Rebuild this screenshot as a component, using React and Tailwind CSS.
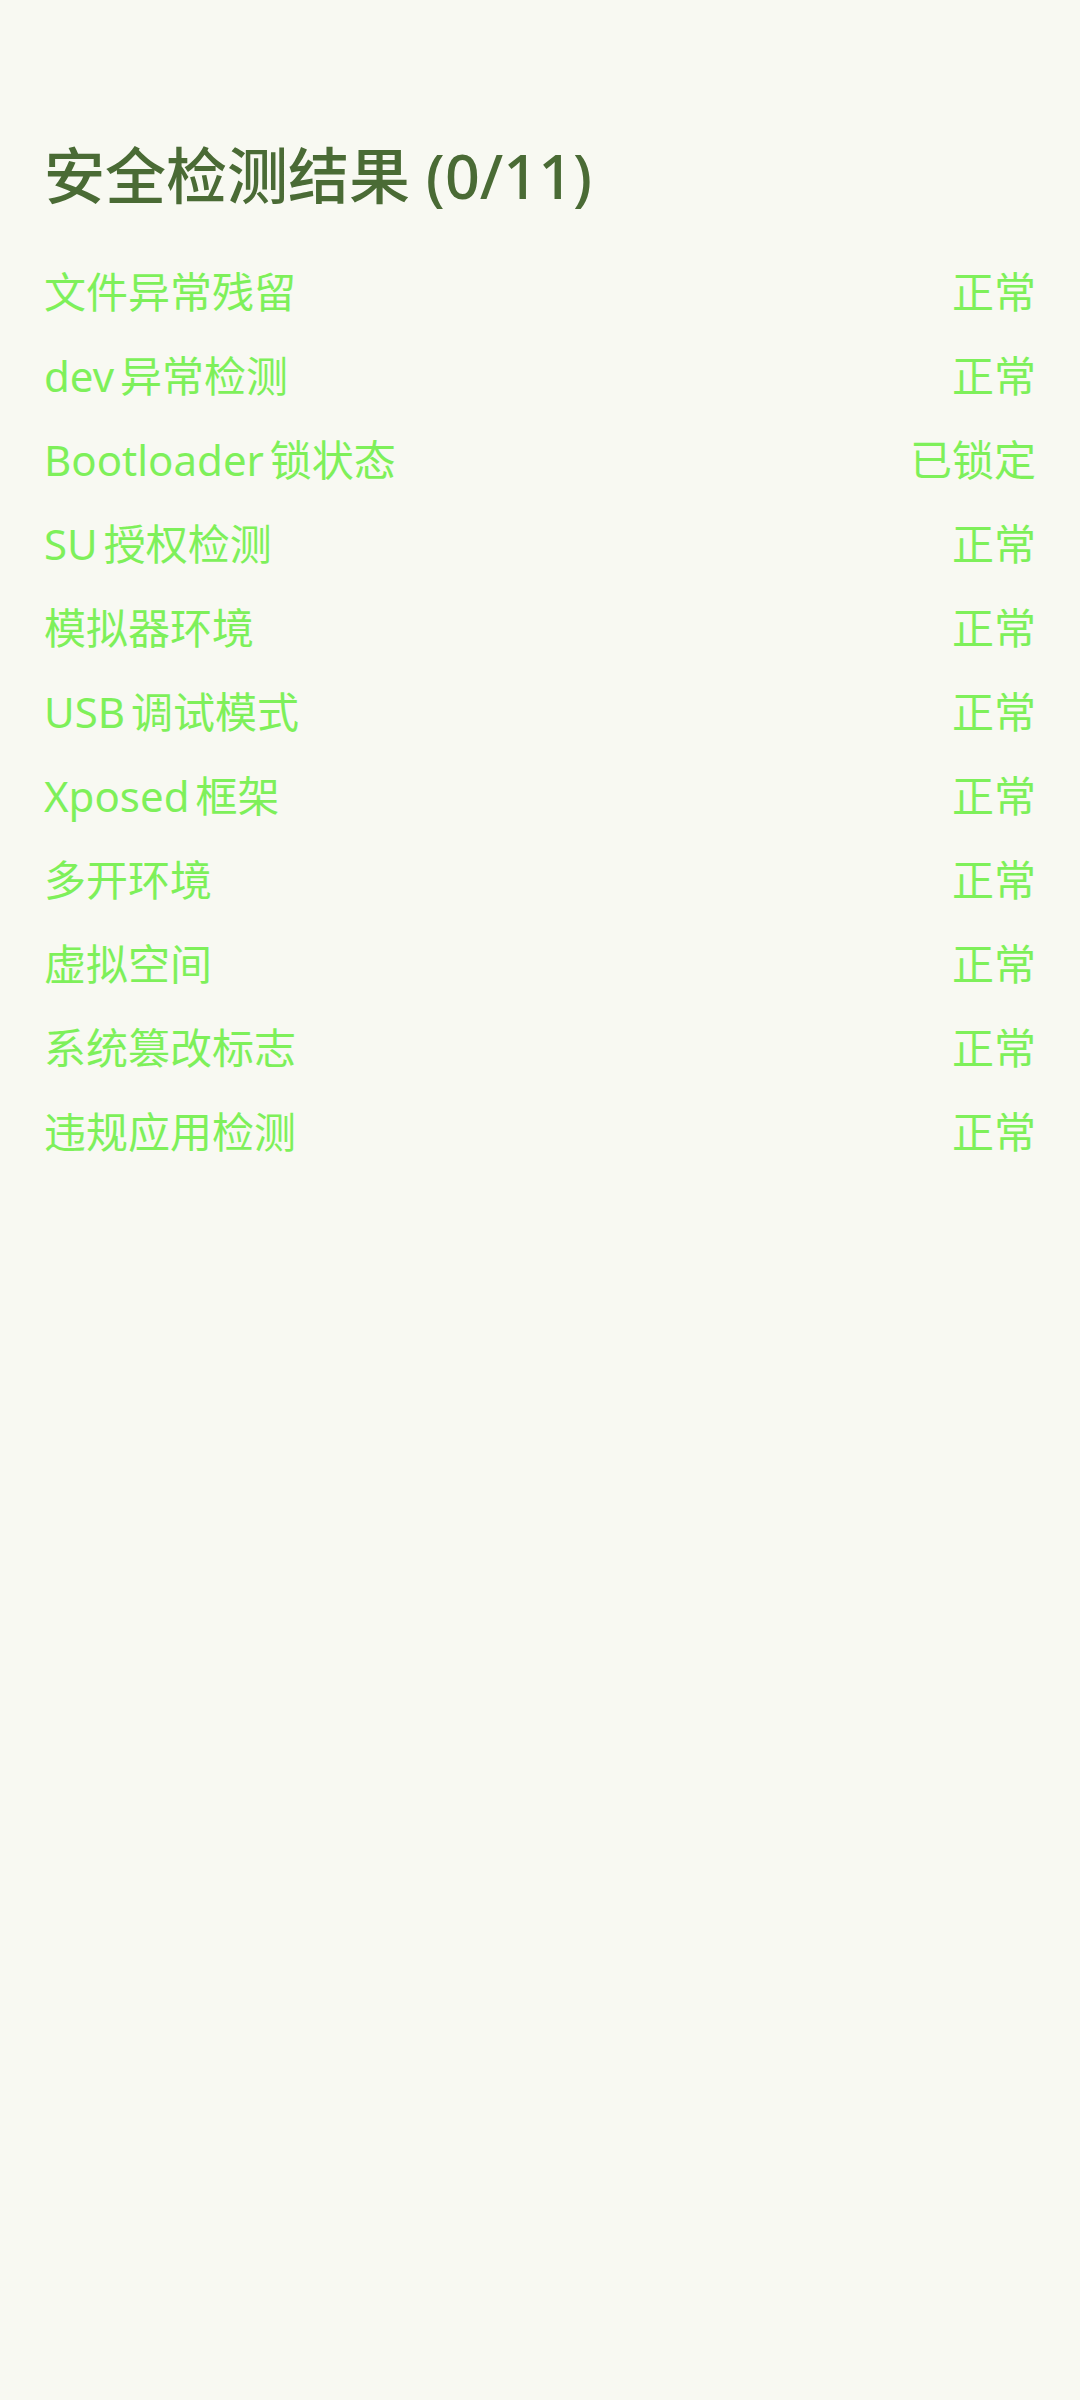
const items = [
  { name: "文件异常残留", status: "正常" },
  { name: "dev 异常检测", status: "正常" },
  { name: "Bootloader 锁状态", status: "已锁定" },
  { name: "SU 授权检测", status: "正常" },
  { name: "模拟器环境", status: "正常" },
  { name: "USB 调试模式", status: "正常" },
  { name: "Xposed 框架", status: "正常" },
  { name: "多开环境", status: "正常" },
  { name: "虚拟空间", status: "正常" },
  { name: "系统篡改标志", status: "正常" },
  { name: "违规应用检测", status: "正常" },
];

export default function App() {
  return (
    <div
      className="min-h-[2400px] w-[1080px] bg-[#f8f9f2] px-[44px] pt-[136px]"
      style={{ fontFamily: '"Noto Sans", "Noto Sans CJK SC", sans-serif' }}
    >
      {/* TITLE */}
      <h1 className="h-[80px] text-[61px] leading-[80px] font-medium text-[#4a6b35]">
        安全检测结果 (0/11)
      </h1>

      {/* RESULTS */}
      <div className="mt-[33px]">
        {items.map((it) => (
          <div
            key={it.name}
            className="flex h-[84px] items-center justify-between text-[42px] font-normal text-[#7ef05a] [word-spacing:-5px]"
          >
            <span>{it.name}</span>
            <span>{it.status}</span>
          </div>
        ))}
      </div>
    </div>
  );
}
